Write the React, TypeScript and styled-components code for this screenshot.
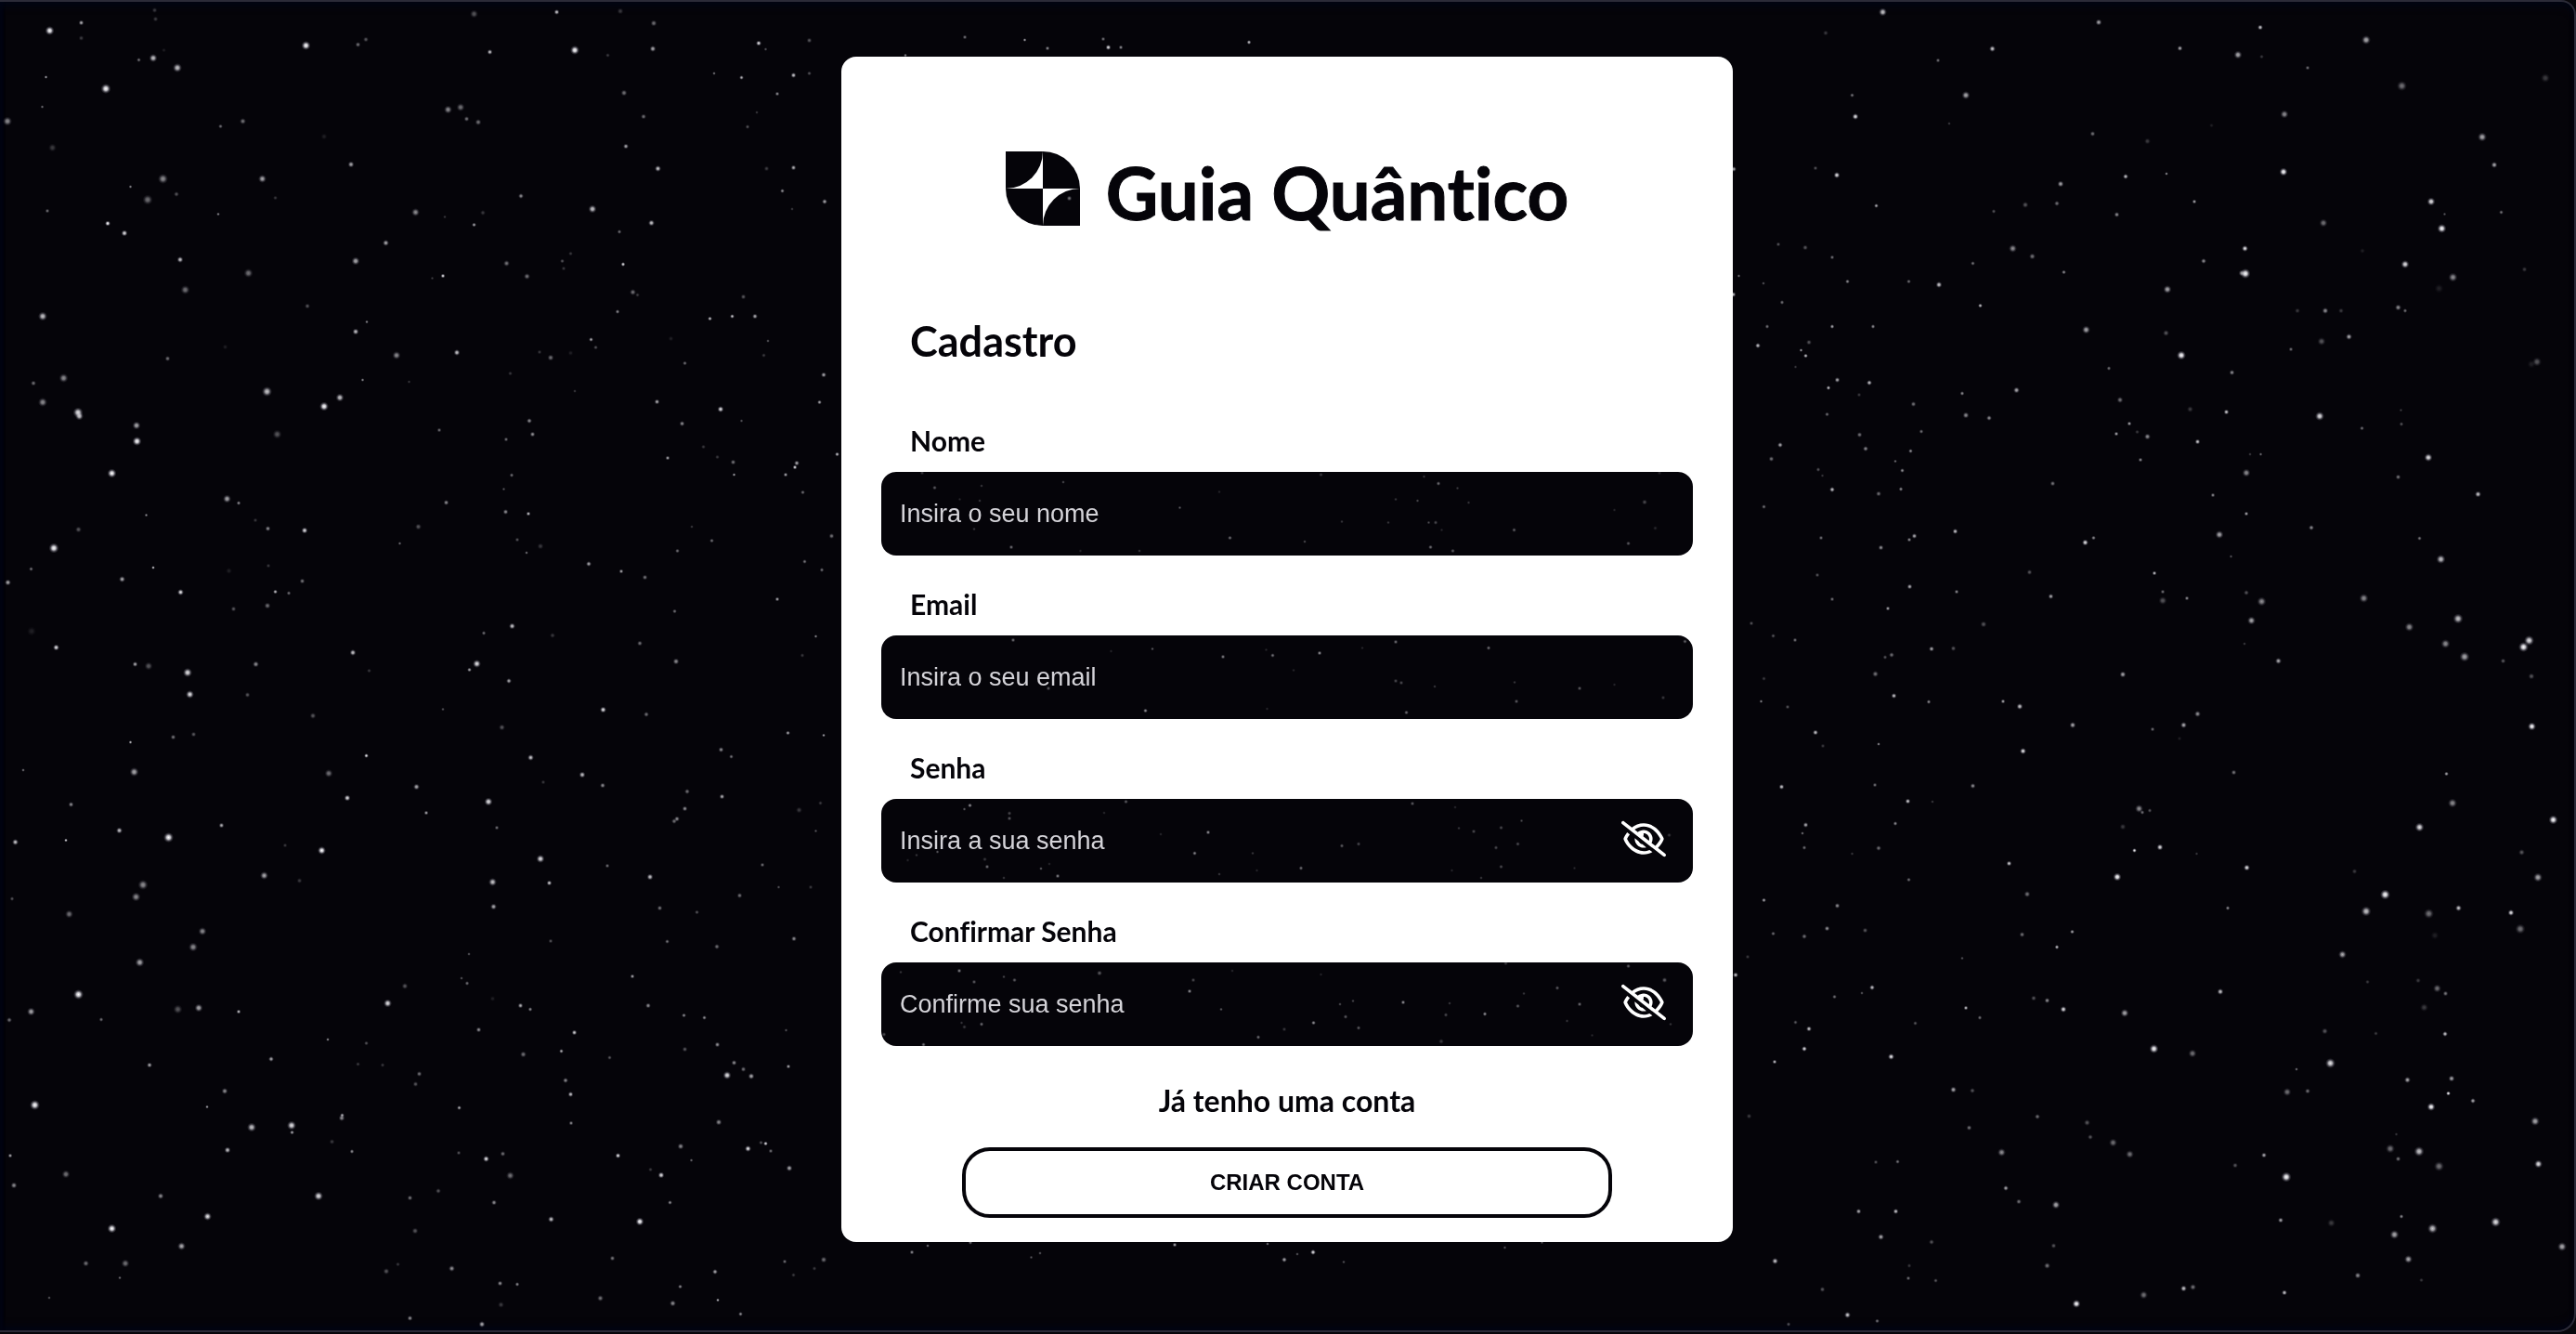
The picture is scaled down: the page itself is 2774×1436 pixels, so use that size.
import React, { useId, useState } from "react";
import styled, { createGlobalStyle } from "styled-components";
import { FaRegEyeSlash, FaRegEye } from "react-icons/fa6";

const GlobalStyle = createGlobalStyle`
  *, *::before, *::after { box-sizing: border-box; }
  body {
    margin: 0;
    background: #07060b;
    color: #000;
    font-family: Lato, "Open Sans", sans-serif;
    font-variant-ligatures: none;
  }
`;

/* ---------- star field ---------- */

/* Every sector is divided into a 1568-unit grid.
   Each star is "x y size brightness", size in pixels, brightness 1-9. */
type Sector = { x: number; y: number; w: number; h: number; dim?: number; stars: string };

const GRID = 1568;

const sectors: Sector[] = [
  {
    x: 0, y: 0, w: 910, h: 720,
    stars: `92 72 8 9,151 53 5 6,151 89 5 2,287 24 5 2,289 45 5 2,284 136 7 7,329 159 8 7,196 208 9 9,258 141 4 4,304 118 4 1,85 181 3 6,78 250 3 4,14 284 8 5,97 346 7 2,409 296 4 4,451 284 6 4,568 107 8 9,664 104 5 4,679 93 5 3,880 33 7 3,909 122 5 7,1033 28 5 7,1151 26 6 2,1213 54 6 4,1211 114 6 6,1067 118 8 9,1128 130 4 2,1408 101 5 8,1421 115 3 3,1502 95 5 3,1325 172 3 4,1376 182 4 6,1472 176 5 7,1502 172 4 3,1442 220 4 5,1158 218 6 4,1194 273 5 4,831 257 7 5,855 252 7 4,866 279 5 4,887 286 6 4,1161 343 5 6,1387 297 4 3,1404 264 3 2,601 320 6 1,651 385 6 6,302 419 9 5,487 419 7 6,274 468 9 4,327 455 5 3,242 438 3 5,88 494 4 4,405 502 3 5,511 464 4 2,200 524 5 9,231 547 6 8,334 609 6 7,461 640 8 4,344 679 8 4,771 498 7 5,825 508 3 2,880 527 4 6,896 499 5 2,967 459 5 5,1099 490 7 7,1221 395 6 7,1422 395 5 2,1472 393 5 6,1452 448 4 5,1530 473 5 6,1470 490 3 2,1209 523 6 7,1149 543 4 4,716 570 6 6,660 612 7 6,822 647 4 8,802 652 3 2,940 617 6 4,978 648 6 4,1043 612 4 3,1046 629 4 2,1059 594 4 2,1156 620 4 8,1174 685 6 4,1183 691 4 2,1146 731 4 5,570 718 5 3,681 755 3 5,660 777 6 7,736 833 7 5,848 826 6 7,79 741 8 7,418 813 5 1,311 841 5 4,118 886 8 5,62 898 5 4,79 943 8 5,145 967 9 8,147 976 7 7,253 997 7 6,254 1034 8 9,495 918 9 7,601 953 8 9,631 932 7 7,514 1018 8 3,673 891 3 5,759 895 3 2,815 1008 4 4,208 1110 8 9,421 1169 7 6,443 1179 4 5,271 1208 3 5,146 1241 6 3,100 1285 9 9,58 1334 4 4,15 1366 6 6,474 1220 4 2,497 1239 5 5,565 1244 6 8,284 1331 3 7,227 1358 6 6,335 1388 6 8,561 1362 5 4,498 1326 4 2,425 1338 6 1,511 1387 4 7,536 1391 4 4,496 1420 6 4,433 1427 5 3,59 1480 8 1,104 1518 6 8,276 1561 7 3,251 1557 5 6,475 1557 6 5,655 1530 6 7,776 1235 6 3,742 1274 3 4,828 1178 5 5,938 1200 5 5,980 1204 4 7,949 1114 4 4,935 1147 3 3,939 1030 4 4,982 987 5 5,988 1018 5 5,1001 825 4 2,1022 838 6 4,1059 828 5 1,947 876 4 2,1067 917 3 2,1097 796 4 6,1105 815 4 3,1317 747 4 7,1359 742 4 7,1401 742 5 6,1379 696 5 3,1425 799 3 3,1417 833 4 2,1271 852 4 4,1245 794 5 1,1528 879 5 6,1521 943 4 6,1219 942 5 6,1337 959 6 8,1266 993 5 5,1376 987 3 3,1305 1048 4 2,1331 1071 4 2,1239 1074 4 6,1360 1083 5 4,1362 1113 3 6,1478 1086 5 6,1475 1095 4 8,1458 1113 4 6,1553 1065 4 7,1490 1154 4 4,1321 1268 4 4,1284 1235 3 2,1543 1257 5 4,1257 1291 4 4,1092 1322 5 6,1153 1339 4 6,1197 1354 5 4,960 1265 4 3,977 1296 3 4,1003 1281 6 2,1493 1317 4 4,1525 1336 4 4,1442 1405 4 6,1252 1433 4 4,950 1468 6 7,898 1484 4 4,1025 1490 5 2,1187 1508 5 4,1514 1492 3 5,885 1556 7 8,1254 1551 6 5,1489 1536 4 2`,
  },
  {
    x: 0, y: 716, w: 910, h: 720,
    stars: `348 17 8 8,352 69 7 8,459 70 5 3,581 119 6 3,685 13 4 2,871 11 4 6,944 37 5 6,321 169 5 4,359 162 5 3,242 181 3 7,43 246 3 4,249 250 8 6,132 327 5 5,610 254 7 4,644 311 6 8,680 212 4 8,773 285 6 6,791 346 4 6,906 320 7 8,922 381 4 4,931 146 6 3,985 217 6 7,1119 104 6 8,1199 115 5 4,1080 257 6 7,1118 282 5 5,1008 274 4 2,822 103 3 3,1338 198 5 5,1357 215 4 4,1462 159 4 6,1528 164 3 6,1340 308 5 6,1275 296 5 4,1271 336 5 5,1256 360 5 5,1251 366 5 4,1483 340 6 2,1522 323 4 2,221 388 6 7,313 404 9 9,411 376 5 6,597 435 7 9,28 415 6 7,122 411 3 8,529 423 4 2,490 493 7 6,556 505 5 2,265 515 9 5,252 543 8 5,22 548 4 3,128 584 7 4,376 624 7 5,358 661 8 5,259 697 8 6,146 772 9 9,330 807 8 3,369 804 7 6,58 812 7 6,17 832 5 4,188 831 4 4,443 812 4 7,719 793 7 8,751 752 6 3,608 878 3 5,680 886 4 3,503 923 5 6,277 937 5 6,417 998 6 5,384 1035 3 6,65 1031 9 9,467 1083 8 7,541 1079 8 8,542 1095 4 6,634 1062 6 5,635 1055 4 6,422 1137 6 7,616 1117 5 2,653 1140 4 5,19 1150 4 6,122 1193 7 4,26 1220 6 5,298 1245 6 5,591 1245 8 8,385 1292 7 8,208 1321 8 9,337 1362 7 6,233 1402 7 4,159 1403 6 4,222 1436 3 4,91 1483 3 3,852 1038 4 6,778 958 5 4,771 982 5 3,664 935 4 2,710 938 4 2,856 734 3 3,867 746 4 4,870 677 3 3,914 782 5 1,966 798 5 6,984 807 4 5,888 855 5 5,1066 861 5 7,971 913 6 4,1042 905 4 6,1131 920 4 3,1049 974 5 5,1059 1006 5 7,1060 1074 4 5,1147 1150 5 8,933 1145 5 4,902 1158 6 8,851 1143 4 3,947 1197 7 4,1227 1196 6 8,1263 1128 6 5,1283 1161 3 4,1207 1183 4 2,917 1260 5 5,813 1233 5 3,761 1249 5 4,770 1326 6 3,1023 1299 6 7,1187 1305 7 9,1243 1260 4 5,838 1414 6 5,717 1421 6 3,738 1405 4 2,928 1449 5 5,960 1452 4 5,1136 1391 5 4,1114 1484 6 4,930 1499 6 2,761 1531 5 5,894 1545 6 6,1248 1496 6 5,1262 1457 4 5,1332 1488 3 7,1327 1422 5 6,1374 1521 4 5,1456 1398 4 4,1528 1394 6 4,1511 1415 4 2,1472 1430 4 2,1465 1179 6 6,1388 1133 6 8,1421 1122 4 8,1412 1119 4 3,1430 1139 4 4,1334 1072 6 5,1349 961 7 8,1394 964 6 6,1379 947 5 4,1362 932 5 5,1331 890 5 5,1271 901 5 3,1463 941 4 6,1269 821 4 5,1307 826 4 5,1203 798 5 5,1173 730 4 6,1459 856 3 3,1206 496 6 7,1127 470 4 4,1003 454 7 8,1019 511 5 7,914 509 7 7,916 566 6 6,1224 569 5 4,1372 540 5 4,1293 579 4 3,1238 648 4 4,1330 660 5 4,1473 641 5 5,1022 647 4 3,1415 468 4 4,1445 520 3 3,1504 520 4 2,1514 389 3 3`,
  },
  {
    x: 1864, y: 0, w: 910, h: 720,
    stars: `282 28 7 7,176 77 5 2,682 52 6 6,485 114 6 7,384 142 4 4,833 113 5 6,941 128 7 6,982 64 5 7,985 133 4 2,1070 159 4 4,1179 94 8 6,1245 201 9 4,1511 183 8 2,436 223 7 6,225 223 4 4,231 273 6 8,405 290 3 2,671 314 5 4,773 331 6 2,1027 268 7 5,892 294 4 1,1394 321 8 6,1416 387 6 6,1025 403 7 9,1299 473 7 8,1324 502 3 3,1319 536 8 9,1429 498 4 4,196 411 6 8,157 394 4 3,270 482 4 6,612 431 6 6,732 414 5 7,808 407 3 5,860 473 4 6,716 503 5 5,605 477 5 4,546 480 6 3,488 495 4 3,523 583 7 5,559 601 6 4,618 638 4 5,449 617 4 4,386 667 6 7,330 660 4 4,216 660 4 5,188 603 4 4,138 580 5 3,88 573 4 3,15 647 3 4,60 664 3 3,4 690 5 7,5 396 5 6,95 709 4 4,463 716 4 7,954 583 6 8,877 612 5 5,955 641 9 9,948 640 6 5,1099 523 7 4,1251 620 7 8,1340 650 8 5,1314 676 8 1,1172 588 5 1,1472 632 5 2,810 678 7 6,659 773 7 6,807 781 6 3,836 833 8 9,930 873 5 5,1051 728 5 2,1103 728 6 5,1132 729 5 2,1238 721 6 5,1251 728 4 4,1147 789 6 6,1096 800 7 3,1039 819 4 4,1496 848 8 3,1485 854 7 1,67 765 4 4,50 810 5 7,188 766 4 6,264 765 4 5,145 803 5 3,139 834 4 7,130 821 3 6,120 860 3 2,197 891 5 6,181 909 4 7,257 897 5 7,238 926 4 2,339 947 5 4,429 922 4 5,530 915 6 6,701 864 4 4,722 937 6 4,178 971 4 4,436 974 6 5,479 980 5 5,239 1019 5 4,353 1012 4 4,250 1052 5 5,91 1043 5 6,333 1057 4 5,305 1081 3 4,318 1103 4 5,75 1076 5 4,162 1101 4 3,170 1115 3 2,188 1148 5 7,274 1157 5 4,315 1147 4 5,61 1188 4 4,167 1261 4 4,278 1284 5 5,340 1257 5 6,331 1265 4 5,416 1246 5 7,739 993 4 6,715 1017 4 6,754 1013 4 2,773 1024 6 5,866 1035 5 7,919 966 5 7,852 959 6 2,760 1078 4 5,597 1133 5 4,1092 976 8 8,1243 961 3 2,1244 994 4 3,1171 1004 4 4,1294 1073 7 8,1238 1118 5 4,1386 1159 6 7,956 1108 7 5,983 1065 3 4,963 1065 3 2,894 1161 4 5,956 1204 4 6,906 1253 7 6,1077 1237 5 5,1278 1262 4 4,1317 1311 8 7,657 1272 6 8,673 1261 4 5,928 1305 3 3,554 1342 5 3,786 1344 4 7,594 1398 5 6,801 1387 4 4,801 1408 7 3,846 1402 4 5,956 1389 5 3,985 1410 8 5,1174 1402 8 5,1349 1450 9 7,1259 1470 8 5,1326 1509 8 5,1361 1540 9 6,1481 1502 9 8,1471 1517 9 9,966 1455 7 6,1016 1550 6 6,332 1375 5 6,419 1387 4 5,188 1405 4 4,291 1426 4 6,469 1464 6 3,160 1348 4 3,78 1491 4 3,119 1501 4 4,372 1521 5 6,413 1520 5 3,298 1535 5 4,286 1541 4 3,38 1461 4 3,953 1509 3 2,1433 1549 5 3`,
  },
  {
    x: 1864, y: 716, w: 910, h: 720,
    stars: `61 32 4 2,268 21 6 4,727 22 6 6,1485 26 6 3,302 72 5 7,56 85 3 5,105 98 4 3,367 86 4 5,505 85 4 6,536 97 6 7,634 140 6 6,157 158 5 7,171 190 4 2,274 185 3 5,542 201 6 8,866 114 6 5,840 140 6 6,782 150 4 4,832 172 4 1,1486 144 7 9,933 251 5 4,1328 255 4 6,1339 323 8 5,1278 380 8 8,1526 363 8 9,94 285 5 7,267 281 4 4,449 283 5 5,328 319 5 7,374 320 3 2,305 371 4 5,139 375 5 6,133 394 3 4,136 428 4 4,274 429 5 4,225 442 3 2,757 336 7 5,763 345 4 4,777 341 4 3,727 379 6 2,796 427 6 8,749 434 4 8,864 442 3 2,516 465 5 7,717 496 7 9,957 475 6 8,1214 538 9 9,1157 483 5 2,1179 577 9 7,1295 583 9 4,1350 569 6 7,1447 580 6 8,1465 619 9 4,1497 498 8 6,1467 439 6 3,1306 634 7 1,550 537 6 4,330 503 4 4,61 551 4 6,197 564 5 5,178 617 5 5,249 622 5 3,78 629 4 4,136 636 5 4,540 632 5 4,633 625 4 6,605 661 4 7,922 570 4 5,1135 678 7 6,1181 743 4 2,1275 739 5 2,1310 758 7 4,1326 770 5 4,1286 803 7 2,1325 865 5 7,9 726 5 7,31 684 4 2,429 687 3 3,262 756 5 7,243 769 3 3,192 777 4 4,120 837 4 3,145 853 5 7,136 899 5 8,81 930 4 7,297 918 6 8,436 804 4 7,462 826 4 4,342 839 4 3,562 781 5 3,587 786 5 5,617 807 6 8,731 816 7 6,785 899 8 9,856 910 7 4,908 766 6 7,1102 858 6 3,1197 864 4 2,1112 933 9 8,1049 947 3 4,1255 972 6 6,1337 969 6 6,1331 1004 4 9,1299 1035 7 9,1377 1021 5 6,1032 1001 7 4,1070 998 5 4,1492 1069 8 6,413 995 6 6,448 997 5 3,34 1057 5 2,442 1084 5 4,569 1058 5 4,661 1073 6 3,667 1106 5 3,709 1119 7 4,740 1147 7 4,502 1142 7 5,269 1165 4 3,309 1164 4 4,989 1149 5 6,1030 1200 9 9,936 1173 5 3,1223 1133 8 4,1235 1100 3 2,1277 1140 9 7,1238 1157 5 4,1314 1175 9 4,1498 1169 7 8,510 1226 5 6,534 1258 5 4,603 1265 7 6,237 1280 5 6,306 1281 5 7,278 1340 6 6,372 1352 5 3,599 1361 5 3,587 1408 6 4,82 1397 6 7,329 1437 4 4,331 1408 4 2,170 1464 5 3,380 1443 4 3,216 1523 6 7,641 1497 7 9,766 1477 7 4,840 1461 6 7,857 1458 6 4,1027 1471 5 7,1020 1301 5 6,1114 1308 7 2,1244 1292 4 5,1231 1335 8 6,1302 1321 9 7,1419 1306 9 8,1542 1363 8 6,1257 1393 7 6,1163 1431 6 5,1281 1442 4 2,271 1538 4 4,107 1545 4 3`,
  },
  {
    x: 940, y: 500, w: 900, h: 630, dim: 0.65,
    stars: `92 22 4 3,116 62 4 5,204 57 3 3,357 47 3 4,163 93 3 2,200 97 3 3,190 173 3 3,260 221 4 6,389 231 3 2,500 232 3 3,576 116 3 5,650 73 3 2,670 197 4 6,810 206 3 4,841 27 4 3,1034 32 3 3,1061 51 4 6,1097 64 3 3,981 93 3 3,1022 97 3 4,1118 102 3 3,880 153 3 3,967 156 3 3,1043 156 3 4,1056 156 4 4,1067 176 3 2,1046 222 4 6,1088 232 4 5,1203 176 4 5,1448 101 5 4,1391 122 3 2,1468 171 4 2,1417 212 4 5,1476 22 4 2,263 470 4 6,524 494 3 5,447 500 3 2,657 515 4 7,750 511 4 6,738 496 3 2,838 505 4 8,918 491 3 2,981 475 4 6,1155 491 4 6,1524 474 4 5,329 600 4 5,511 660 4 8,740 655 3 2,789 551 3 2,981 580 4 4,991 585 4 4,1054 595 3 3,1204 584 3 3,1207 635 4 5,1326 600 4 5,1391 590 3 2,1483 625 4 3,1001 664 4 6,172 923 3 5,182 913 4 8,256 934 4 4,256 948 4 5,475 903 4 5,434 933 3 2,629 986 4 8,604 1042 4 7,713 1042 3 3,540 990 3 2,803 1082 4 6,720 1088 3 2,880 1022 4 5,911 1017 4 4,1012 909 4 5,1092 918 3 2,1099 974 3 3,1127 983 4 4,1179 973 4 4,1169 1027 4 4,1217 954 3 4,1210 1017 4 4,1179 1078 4 4,1141 1108 3 3,1086 1088 3 2,1316 1082 3 2,1494 993 4 3,121 1038 3 5,82 1047 3 3,65 1060 3 2,210 1058 4 3,214 1078 4 6,315 1083 3 5,331 1070 3 2,347 1103 4 7,246 1108 3 3,650 1098 3 3,162 1357 4 7,190 1386 4 5,52 1360 3 3,246 1372 3 4,266 1381 4 5,425 1363 5 5,601 1381 4 4,594 1411 4 8,674 1357 3 2,653 1460 3 5,841 1367 3 2,995 1441 4 8,901 1437 3 4,876 1446 3 4,887 1480 4 5,827 1496 4 8,911 1510 4 5,772 1513 4 3,723 1535 4 6,1082 1443 3 3,1075 1475 4 4,1148 1472 4 8,1210 1451 4 5,1221 1417 3 3,1284 1402 4 5,1326 1446 4 6,1302 1491 3 3,1187 1337 4 3,1417 1344 4 5,1485 1381 5 5,1349 1530 3 2,1497 1500 3 3,166 1496 3 3,172 1507 4 3,204 1500 4 6,21 1527 4 4,95 1554 4 6,1066 1546 5 3`,
  },
  {
    x: 1060, y: 130, w: 660, h: 495, dim: 0.8,
    stars: `217 264 5 5,133 359 5 4,117 364 4 3,183 367 5 4,231 400 4 8,763 356 5 4`,
  },
  {
    x: 890, y: 40, w: 523, h: 560,
    stars: `447 0 4 4,640 8 3 6,714 34 4 5,894 6 4 4,910 31 5 8,950 31 4 5,1364 15 4 7,255 54 3 5`,
  },
  {
    x: 900, y: 1100, w: 980, h: 523,
    stars: `131 743 4 5,158 722 3 4,232 712 4 4,584 720 4 6,744 716 3 4,822 743 5 8,773 767 5 6,795 750 3 3,352 746 3 3,337 760 3 3,1153 728 3 3,1217 712 3 3,875 775 3 3`,
  },
];

const toCircle = (s: Sector, raw: string) => {
  const [gx, gy, size, level] = raw.trim().split(" ").map(Number);
  return {
    cx: Math.round((s.x + (gx * s.w) / GRID) * 2) / 2,
    cy: Math.round((s.y + (gy * s.h) / GRID) * 2) / 2,
    r: size / 2 + (size > 6 ? 1 : 0.5),
    opacity: Math.min(1, level / 9) * (s.dim ?? 1),
  };
};

const stars = sectors.flatMap((s) => s.stars.split(",").map((raw) => toCircle(s, raw)));

const SkySvg = styled.svg`
  position: absolute;
  inset: 0;
  width: 100%;
  height: 100%;
  pointer-events: none;
`;

const StarField = () => (
  <SkySvg viewBox="0 2 2772 1430" preserveAspectRatio="xMidYMid slice" aria-hidden="true">
    <defs>
      <radialGradient id="glow">
        <stop offset="0" stopColor="#ffffff" />
        <stop offset="0.35" stopColor="#f4f3f8" stopOpacity="0.8" />
        <stop offset="0.7" stopColor="#d8d6e4" stopOpacity="0.25" />
        <stop offset="1" stopColor="#c8c6da" stopOpacity="0" />
      </radialGradient>
    </defs>
    {stars.map((star, i) => (
      <circle key={i} {...star} fill="url(#glow)" />
    ))}
  </SkySvg>
);

/* ---------- page ---------- */

const Page = styled.div`
  display: flex;
  min-height: 100vh;
  padding-bottom: 2px;
`;

const Frame = styled.main`
  position: relative;
  isolation: isolate;
  overflow: hidden;
  flex: 1;
  display: flex;
  flex-direction: column;
  align-items: center;
  padding: 59px 0;
  background: #050409;
  border: solid #2b2b38;
  border-width: 2px 2px 2px 0;
  border-radius: 0 16px 20px 0;
  box-shadow: inset 0 8px 8px -4px #010514, inset 6px 0 2px -2px #010310,
    inset 0 -8px 8px -4px #010414;
`;

const Card = styled.section`
  position: relative;
  width: 100%;
  max-width: 960px;
  padding: 102px 43px 26px;
  border-radius: 16px;
  background: #fff;
  mix-blend-mode: screen;
`;

const Brand = styled.header`
  display: flex;
  align-items: center;
  justify-content: center;
  gap: 28px;
`;

const BrandName = styled.h1`
  margin: 0;
  padding-top: 8px;
  font-size: 78px;
  line-height: 72px;
  font-weight: 700;
  -webkit-text-stroke: 1px #000;
`;

const FormTitle = styled.h2`
  margin: 100px 31px 63px;
  font-size: 45px;
  line-height: 48px;
  font-weight: 700;
`;

const Fields = styled.div`
  display: flex;
  flex-direction: column;
  gap: 32px;
`;

const FieldBox = styled.div`
  display: flex;
  flex-direction: column;
  gap: 14px;
`;

const Label = styled.label`
  padding: 0 31px;
  font-size: 30px;
  line-height: 40px;
  font-weight: 700;
`;

const InputWrap = styled.div`
  position: relative;
  display: flex;
`;

const Input = styled.input`
  width: 100%;
  height: 90px;
  padding: 0 20px;
  border: 0;
  border-radius: 16px;
  background: #000;
  color: #fff;
  font-family: "Liberation Sans", Arial, sans-serif;
  font-size: 27px;

  &::placeholder {
    color: #d3d2d7;
    opacity: 1;
  }
`;

const Toggle = styled.button`
  position: absolute;
  inset: 0 29px 4px auto;
  display: flex;
  align-items: center;
  padding: 0;
  border: 0;
  background: none;
  color: #fff;
  font-size: 48px;
  cursor: pointer;
`;

const Actions = styled.div`
  display: flex;
  flex-direction: column;
  align-items: center;
  gap: 30px;
  margin-top: 39px;
`;

const LoginLink = styled.a`
  color: #000;
  font-size: 32px;
  line-height: 40px;
  font-weight: 700;
  text-decoration: none;
`;

const Submit = styled.button`
  width: 80%;
  height: 76px;
  border: 4px solid #000;
  border-radius: 30px;
  background: #fff;
  color: #000;
  font-family: "Liberation Sans", Arial, sans-serif;
  font-size: 24px;
  font-weight: 700;
  cursor: pointer;
`;

const Logo = () => (
  <svg width="80" height="80" viewBox="0 0 80 80" aria-hidden="true">
    <path d="M0 0H40A40 40 0 0 1 0 40Z" />
    <path d="M40 0A40 40 0 0 1 80 40H40Z" />
    <path d="M0 40H40V80A40 40 0 0 1 0 40Z" />
    <path d="M80 80H40A40 40 0 0 1 80 40Z" />
  </svg>
);

type FieldProps = { label: string; placeholder: string; type?: string };

const Field = ({ label, placeholder, type = "text" }: FieldProps) => {
  const id = useId();
  const [visible, setVisible] = useState(false);
  const isPassword = type === "password";

  return (
    <FieldBox>
      <Label htmlFor={id}>{label}</Label>
      <InputWrap>
        <Input id={id} type={isPassword && visible ? "text" : type} placeholder={placeholder} />
        {isPassword && (
          <Toggle
            type="button"
            aria-label={visible ? "Ocultar senha" : "Mostrar senha"}
            onClick={() => setVisible(!visible)}
          >
            {visible ? <FaRegEye /> : <FaRegEyeSlash />}
          </Toggle>
        )}
      </InputWrap>
    </FieldBox>
  );
};

export default function App() {
  return (
    <Page>
      <GlobalStyle />
      <Frame>
        <StarField />
        <Card>
          <Brand>
            <Logo />
            <BrandName>Guia Quântico</BrandName>
          </Brand>
          <form onSubmit={(e) => e.preventDefault()}>
            <FormTitle>Cadastro</FormTitle>
            <Fields>
              <Field label="Nome" placeholder="Insira o seu nome" />
              <Field label="Email" type="email" placeholder="Insira o seu email" />
              <Field label="Senha" type="password" placeholder="Insira a sua senha" />
              <Field label="Confirmar Senha" type="password" placeholder="Confirme sua senha" />
            </Fields>
            <Actions>
              <LoginLink href="#login">Já tenho uma conta</LoginLink>
              <Submit type="submit">CRIAR CONTA</Submit>
            </Actions>
          </form>
        </Card>
      </Frame>
    </Page>
  );
}
